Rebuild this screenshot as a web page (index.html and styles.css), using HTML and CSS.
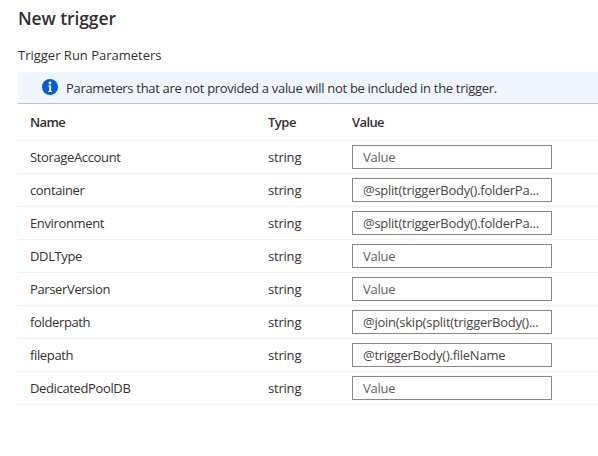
FILE: index.html
```html
<!DOCTYPE html>
<html lang="en">
<head>
<meta charset="utf-8">
<title>New trigger</title>
<link rel="stylesheet" href="styles.css">
</head>
<body>
<main class="panel">
<h1>New trigger</h1>
<h2>Trigger Run Parameters</h2>
<div class="info">
<svg class="icon" viewBox="0 0 16 16"><circle cx="8" cy="8" r="8" fill="#015cda"/><circle cx="8" cy="4" r="1.4" fill="#fff"/><path d="M6.2 6.4H9.1V12h1v1H6.2v-1h1V7.4h-1z" fill="#fff"/></svg>
<span>Parameters that are not provided a value will not be included in the trigger.</span>
</div>
<div class="row head"><span>Name</span><span>Type</span><span>Value</span></div>
<div class="row"><span>StorageAccount</span><span>string</span><div class="field empty">Value</div></div>
<div class="row"><span>container</span><span>string</span><div class="field">@split(triggerBody().folderPa...</div></div>
<div class="row"><span>Environment</span><span>string</span><div class="field">@split(triggerBody().folderPa...</div></div>
<div class="row"><span>DDLType</span><span>string</span><div class="field empty">Value</div></div>
<div class="row"><span>ParserVersion</span><span>string</span><div class="field empty">Value</div></div>
<div class="row"><span>folderpath</span><span>string</span><div class="field">@join(skip(split(triggerBody()...</div></div>
<div class="row"><span>filepath</span><span>string</span><div class="field">@triggerBody().fileName</div></div>
<div class="row"><span>DedicatedPoolDB</span><span>string</span><div class="field empty">Value</div></div>
</main>
</body>
</html>
```
FILE: styles.css
```css
* { box-sizing: border-box; }
body { margin: 0; background: #fff; color: #323130; font: 13px/18px "Open Sans", "Noto Sans", sans-serif; letter-spacing: -0.36px; overflow: hidden; }
.panel { padding: 6px 0 0 18px; }
h1 { margin: 0; font-size: 17.5px; line-height: 24px; font-weight: 600; letter-spacing: -0.1px; }
h2 { margin: 16px 0 8px; font-size: 13px; line-height: 18px; font-weight: 400; letter-spacing: 0; }
.info { display: flex; align-items: center; height: 32px; padding: 1px 0 0 24px; gap: 8px; background: #f0f6ff; border-bottom: 1px solid #c3c1c4; letter-spacing: -0.31px; }
.icon { width: 16px; height: 16px; margin-top: -2px; }
.row { display: grid; grid-template-columns: 238px 84px 200px; align-items: center; height: 33px; padding-left: 12px; border-bottom: 1px solid #f3f2f1; white-space: nowrap; }
.head { height: 37px; font-weight: 600; letter-spacing: -0.6px; }
.row > span:nth-child(2) { letter-spacing: -0.2px; }
.head > span:nth-child(2) { letter-spacing: -0.5px; }
.field { height: 24px; border: 1px solid #8a8886; padding-left: 10px; line-height: 22px; color: #484644; letter-spacing: -0.25px; }
.empty { color: #605e5c; }
```
